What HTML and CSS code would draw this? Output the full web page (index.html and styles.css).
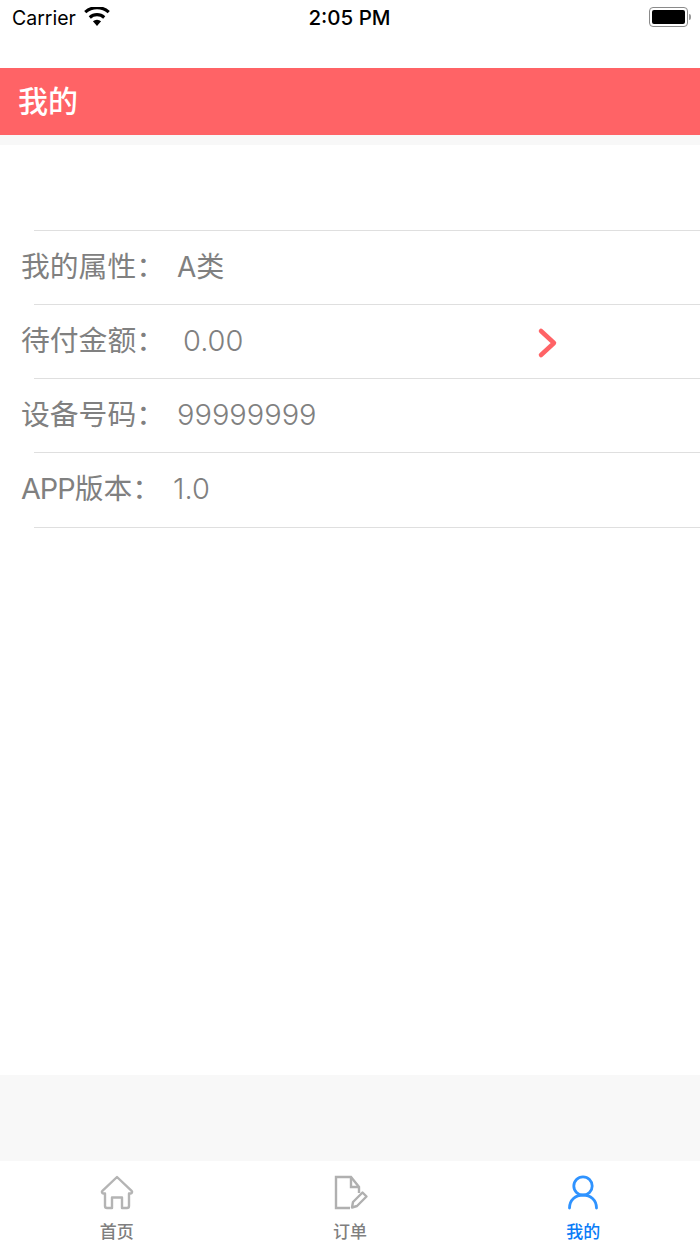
FILE: index.html
```html
<!DOCTYPE html>
<html lang="zh-CN">
<head>
  <meta charset="UTF-8">
  <title>我的</title>
  <link rel="stylesheet" href="styles.css">
</head>
<body>

<div class="page">
  <div class="status-bar">
    <div class="status-left">
      <span class="carrier">Carrier</span>
      <svg class="wifi" width="26" height="20" viewBox="1.500 2 23 17">
        <path d="M13 18.500l-3.600-4.300a5.400 5.400 0 0 1 7.200 0z" fill="#000"/>
        <path d="M6.600 10.900a9.600 9.600 0 0 1 12.800 0" fill="none" stroke="#000" stroke-width="2.800"/>
        <path d="M2.600 6.200a15.600 15.600 0 0 1 20.800 0" fill="none" stroke="#000" stroke-width="2.800"/>
      </svg>
    </div>
    <div class="status-time">2:05 PM</div>
    <div class="status-right">
      <div class="battery"><div class="battery-fill"></div></div>
      <div class="battery-cap"></div>
    </div>
  </div>

  <div class="nav-bar">我的</div>
  <div class="nav-gap"></div>

  <div class="content">
    <div class="list">
      <div class="row">
        <span class="label">我的属性：</span>
        <span class="value value-type">A类</span>
      </div>
      <div class="row">
        <span class="label">待付金额：</span>
        <span class="value value-money">0.00</span>
        <svg class="arrow" width="22" height="32" viewBox="0 0 22 32">
          <path d="M4 4l13 12L4 28" fill="none" stroke="#ff6366" stroke-width="4.500" stroke-linecap="round" stroke-linejoin="round"/>
        </svg>
      </div>
      <div class="row">
        <span class="label">设备号码：</span>
        <span class="value">99999999</span>
      </div>
      <div class="row">
        <span class="label"><span class="label-latin">APP</span>版本：</span>
        <span class="value">1.0</span>
      </div>
    </div>
  </div>

  <div class="bottom-gap"></div>

  <div class="tab-bar">
    <div class="tab">
      <svg class="tab-icon" width="38" height="38" viewBox="0 0 38 38">
        <path d="M7 19.500h-1.600a1.500 1.500 0 0 1-1-2.600L19 3l14.600 13.900a1.500 1.500 0 0 1-1 2.600H31V32a2 2 0 0 1-2 2h-5V23.500h-10V34H9a2 2 0 0 1-2-2z" fill="none" stroke="#b4b4b4" stroke-width="2.400" stroke-linejoin="round"/>
      </svg>
      <span class="tab-label">首页</span>
    </div>
    <div class="tab">
      <svg class="tab-icon" width="38" height="38" viewBox="0 0 38 38">
        <path d="M19 34H5V3h15l8 10v6" fill="none" stroke="#b0b0b0" stroke-width="2.400"/>
        <path d="M20 3v10h8" fill="none" stroke="#b0b0b0" stroke-width="2.400"/>
        <path d="M21 33.500l1-5.500 9.500-9.500 4 4-9.500 9.500z" fill="none" stroke="#b0b0b0" stroke-width="2.400" stroke-linejoin="round"/>
      </svg>
      <span class="tab-label">订单</span>
    </div>
    <div class="tab tab-active">
      <svg class="tab-icon" width="38" height="38" viewBox="0 0 38 38">
        <circle cx="19" cy="12" r="9.200" fill="none" stroke="#2f93ff" stroke-width="2.800"/>
        <path d="M5.500 34c0-8 6-13 13.500-13s13.500 5 13.500 13" fill="none" stroke="#2f93ff" stroke-width="2.800" stroke-linecap="round"/>
      </svg>
      <span class="tab-label">我的</span>
    </div>
  </div>
</div>

</body>
</html>
```

FILE: styles.css
```css
html, body {
  margin: 0;
  padding: 0;
  height: 100%;
  background-color: #fff;
  font-family: Inter, "Noto Sans CJK SC", sans-serif;
}

.page {
  display: flex;
  flex-direction: column;
  width: 700px;
  height: 1244px;
  overflow: hidden;
}

.status-bar {
  display: flex;
  justify-content: space-between;
  height: 68px;
  padding: 6px 9px 0 12px;
  box-sizing: border-box;
  color: #000;
  font-size: 19.500px;
  line-height: 24px;
}

.status-left {
  display: flex;
  align-items: flex-start;
  gap: 8px;
  width: 200px;
}

.wifi {
  margin-top: 1px;
}

.status-time {
  font-weight: 500;
  font-size: 20.500px;
}

.status-right {
  display: flex;
  justify-content: flex-end;
  align-items: center;
  align-self: flex-start;
  width: 204px;
  height: 22px;
}

.battery {
  width: 33px;
  height: 14px;
  padding: 2px;
  border: 1.500px solid #8a8a8a;
  border-radius: 4px;
  box-sizing: content-box;
}

.battery-fill {
  height: 100%;
  background-color: #000;
  border-radius: 2px;
}

.battery-cap {
  width: 2px;
  height: 6px;
  margin-left: 1px;
  background-color: #9a9a9a;
  border-radius: 0 2px 2px 0;
}

.nav-bar {
  height: 67px;
  padding-left: 18px;
  background-color: #ff6366;
  color: #fff;
  font-size: 30px;
  font-weight: 500;
  line-height: 67px;
}

.nav-gap {
  height: 10px;
  background-color: #f8f8f8;
}

.content {
  height: 930px;
  padding-top: 85px;
  box-sizing: border-box;
  background-color: #fff;
}

.list {
  border-top: 1px solid #dfdfdf;
  margin-left: 34px;
}

.row {
  display: flex;
  align-items: baseline;
  position: relative;
  height: 74.150px;
  margin-left: -13px;
  padding-top: 16px;
  box-sizing: border-box;
  color: #808080;
  font-size: 29px;
  line-height: 40px;
}

.row::after {
  content: "";
  position: absolute;
  left: 13px;
  right: 0;
  bottom: 0;
  height: 1px;
  background-color: #dfdfdf;
}

.label {
  font-size: 28.800px;
}

.label-latin {
  letter-spacing: -1px;
}

.value {
  margin-left: 12px;
  font-weight: 300;
}

.value-type {
  margin-left: 12px;
  font-size: 28px;
  font-weight: 400;
}

.value-money {
  margin-left: 18px;
}

.arrow {
  position: absolute;
  left: 516px;
  top: 22px;
}

.bottom-gap {
  height: 86px;
  background-color: #f8f8f8;
}

.tab-bar {
  display: flex;
  flex: 1;
  background-color: #fff;
}

.tab {
  display: flex;
  flex: 1;
  flex-direction: column;
  align-items: center;
  padding-top: 13px;
  color: #7f7f7f;
}

.tab-active {
  color: #0a7cf7;
}

.tab-label {
  margin-top: 9px;
  font-size: 17px;
  font-weight: 500;
  line-height: 22px;
}
```
